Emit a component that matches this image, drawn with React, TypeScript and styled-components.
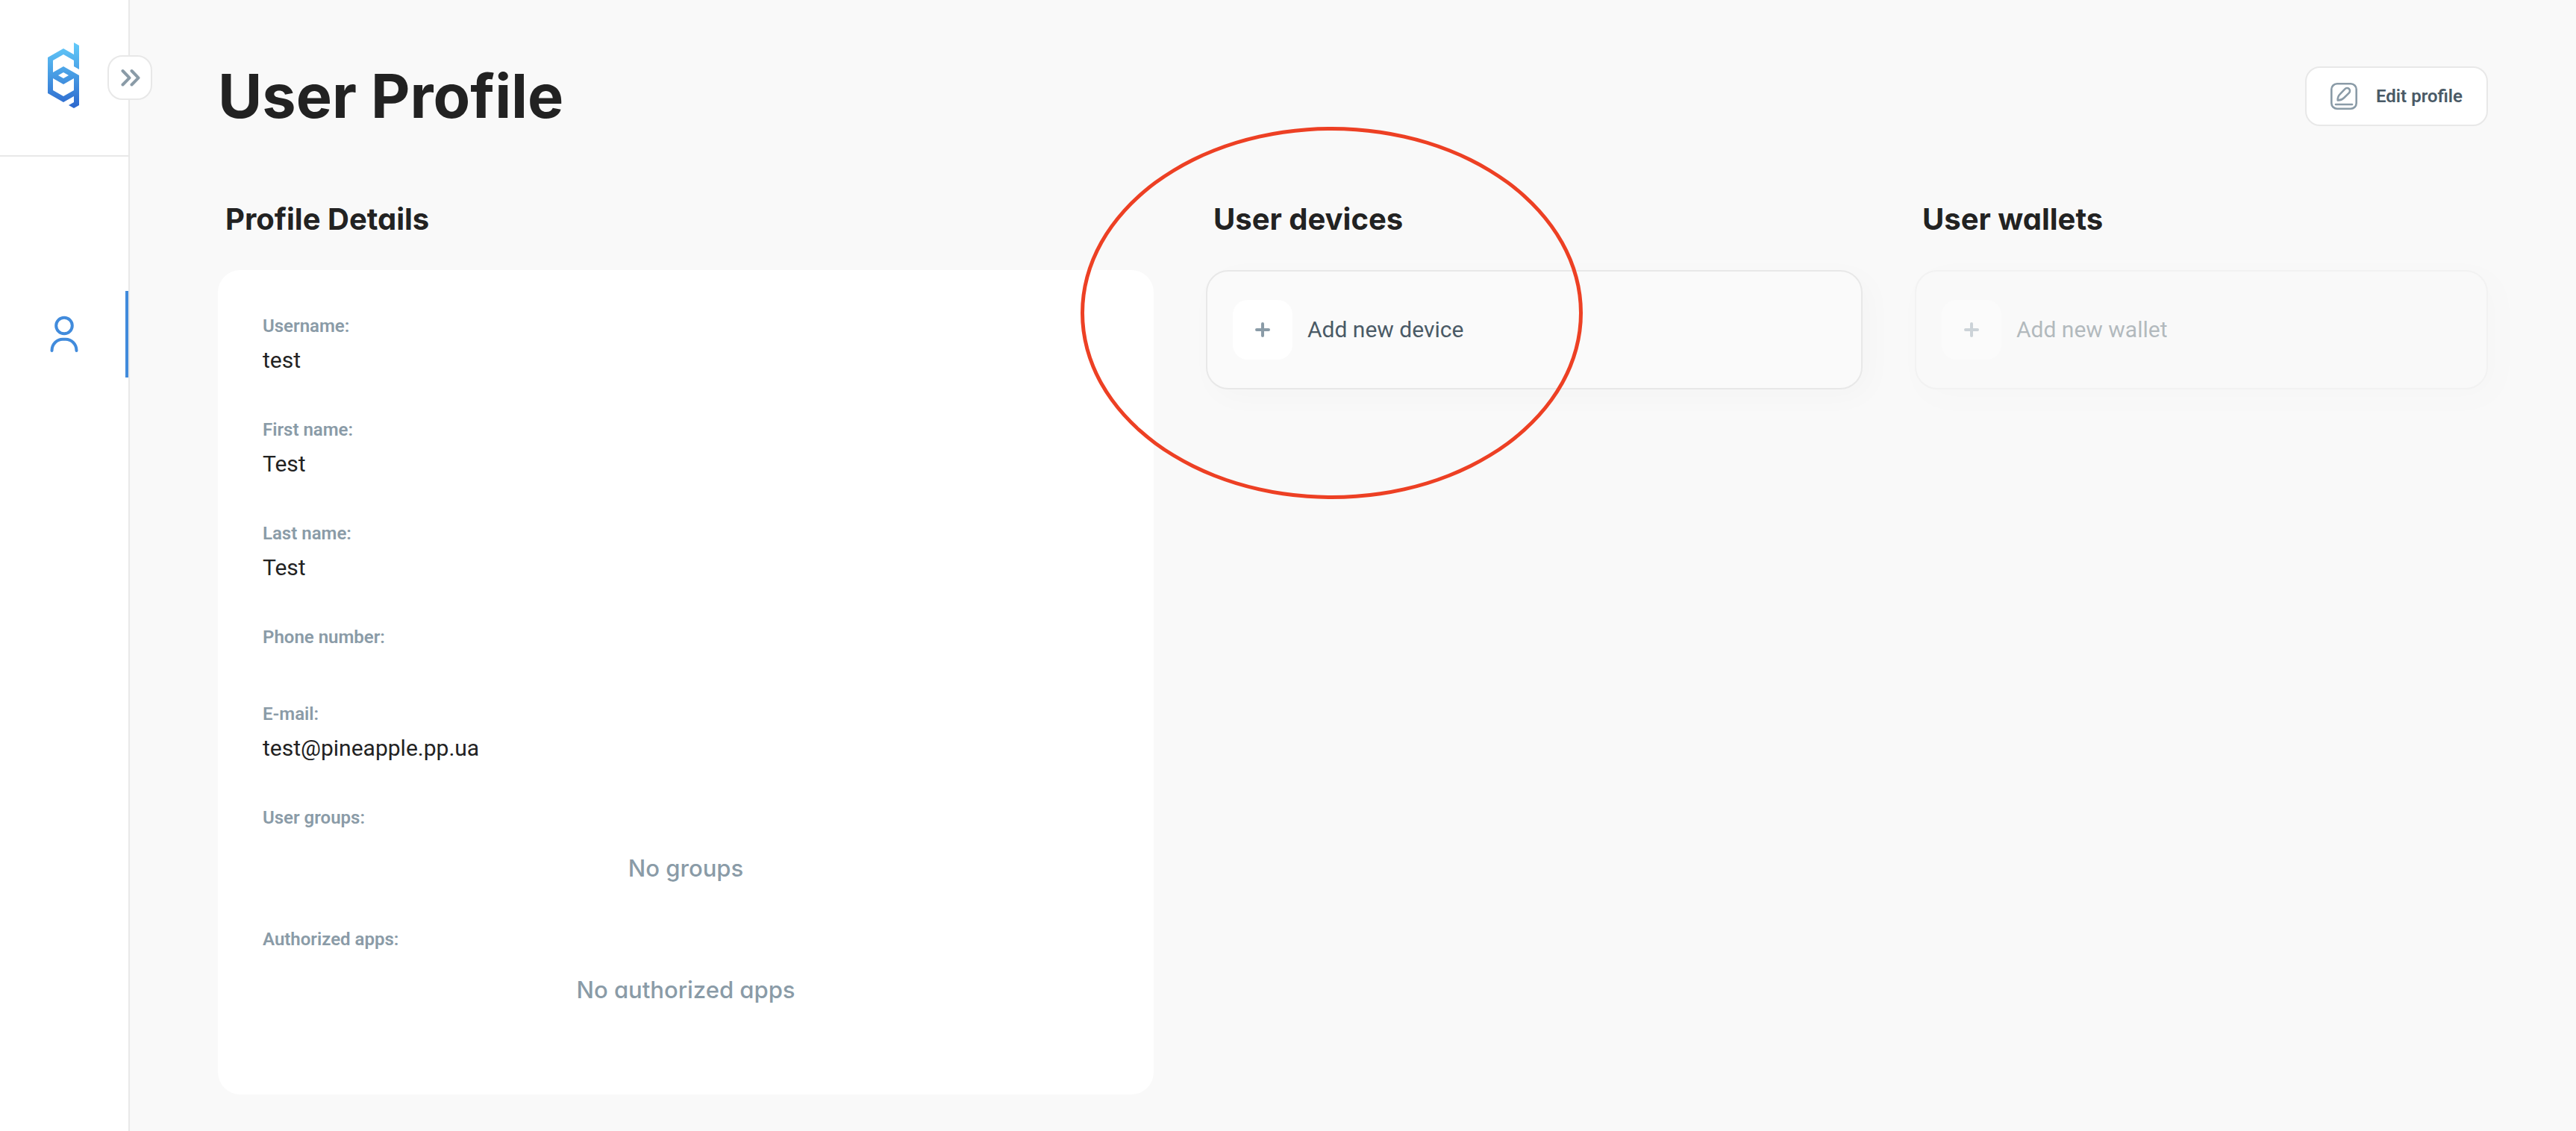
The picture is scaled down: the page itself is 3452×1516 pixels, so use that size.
import React from "react";
import styled, { createGlobalStyle } from "styled-components";

const color = {
  page: "#f9f9f9",
  surface: "#ffffff",
  line: "#e8e8e8",
  ink: "#222222",
  slate: "#4a5a66",
  muted: "#8a9ba7",
  accent: "#418bdc",
  marker: "#ed4024",
};

const displayFont = `Inter, "Open Sans", sans-serif`;

const GlobalStyle = createGlobalStyle`
  *, *::before, *::after { box-sizing: border-box; }
  body {
    margin: 0;
    background: ${color.page};
    color: ${color.ink};
    font-family: Roboto, "Liberation Sans", sans-serif;
    -webkit-font-smoothing: antialiased;
  }
  button { font: inherit; cursor: pointer; }
`;

const Shell = styled.div`
  display: flex;
  min-height: 100vh;
`;

const Sidebar = styled.aside`
  position: relative;
  flex: none;
  width: 174px;
  background: ${color.surface};
  border-right: 2px solid ${color.line};
`;

const Brand = styled.a`
  display: flex;
  justify-content: center;
  align-items: center;
  height: 210px;
  padding: 0 2px 6px 0;
  border-bottom: 2px solid ${color.line};
`;

const Toggle = styled.button`
  position: absolute;
  top: 74px;
  right: -32px;
  display: grid;
  place-items: center;
  width: 60px;
  height: 60px;
  padding: 0;
  background: ${color.surface};
  border: 2px solid ${color.line};
  border-radius: 20px;
`;

const Nav = styled.nav`
  padding-top: 180px;
`;

const NavLink = styled.a`
  display: flex;
  justify-content: center;
  align-items: center;
  height: 116px;
  padding-left: 4px;
  border-right: 4px solid ${color.accent};
`;

const Main = styled.main`
  flex: 1;
  min-width: 0;
  padding: 70px 118px 48px;
`;

const Header = styled.header`
  display: flex;
  justify-content: space-between;
  align-items: center;
  height: 118px;
`;

const PageTitle = styled.h1`
  margin: 0;
  font: 700 81px/118px ${displayFont};
`;

const EditButton = styled.button`
  display: flex;
  align-items: center;
  gap: 25px;
  height: 80px;
  padding: 0 32px;
  background: ${color.surface};
  border: 2px solid ${color.line};
  border-radius: 20px;
  color: ${color.slate};
  font-size: 24px;
  font-weight: 600;
  line-height: 28px;
`;

const Columns = styled.div`
  display: grid;
  grid-template-columns: 1254fr 880fr 768fr;
  gap: 70px;
  align-items: start;
  padding-top: 76px;
`;

const Section = styled.section`
  position: relative;
`;

const SectionTitle = styled.h2`
  margin: 0;
  padding: 0 10px 38px;
  font: 700 40px/60px ${displayFont};
  font-feature-settings: "cv11";
`;

const Details = styled.dl`
  margin: 0;
  padding: 61px 60px 0;
  background: ${color.surface};
  border-radius: 30px;
  overflow: hidden;
`;

const Field = styled.div`
  padding-bottom: 61px;

  &:last-child {
    padding-bottom: 120px;
  }
`;

const Label = styled.dt`
  margin-bottom: 14px;
  color: ${color.muted};
  font-size: 24px;
  font-weight: 600;
  line-height: 28px;
`;

const Value = styled.dd`
  margin: 0;
  font-size: 30px;
  line-height: 36px;
`;

const Empty = styled.dd`
  margin: 0;
  padding-top: 20px;
  color: ${color.muted};
  font: 500 31px/40px ${displayFont};
  font-feature-settings: "cv11";
  text-align: center;
`;

const AddTile = styled.span`
  display: grid;
  place-items: center;
  width: 80px;
  height: 80px;
  background: ${color.surface};
  border-radius: 20px;
`;

const AddButton = styled.button`
  display: flex;
  align-items: center;
  gap: 20px;
  width: 100%;
  height: 160px;
  padding: 0 34px;
  background: #fafafa;
  border: 2px solid ${color.line};
  border-radius: 30px;
  box-shadow: 10px 10px 40px rgba(0, 0, 0, 0.024);
  color: ${color.slate};
  font-size: 30px;
  line-height: 36px;

  &:disabled {
    opacity: 0.4;
    cursor: default;
  }
`;

const Highlight = styled.div`
  position: absolute;
  top: -94px;
  left: -168px;
  width: 673px;
  height: 499px;
  border: 5px solid ${color.marker};
  border-radius: 50%;
  pointer-events: none;
`;

const Logo = () => (
  <svg width="42" height="88" viewBox="192 171 126 264" aria-hidden="true">
    <defs>
      <linearGradient id="brand" x1="0" y1="0" x2="0" y2="1">
        <stop offset="0" stopColor="#63cbfa" />
        <stop offset="0.5" stopColor="#479be3" />
        <stop offset="1" stopColor="#2c67cd" />
      </linearGradient>
    </defs>
    <path
      fill="url(#brand)"
      fillRule="evenodd"
      d="M297 171 318 183V279L297 267V243L255 219 213 243V291L255 267 318 303V423L297 435 276 423 297 411V387L255 411 192 375V231L255 195 297 219ZM213 315V363L255 387 297 363V315L255 339ZM234 303 255 315 276 303 255 291Z"
    />
  </svg>
);

const ChevronsIcon = () => (
  <svg width="28" height="24" viewBox="0 0 28 24" fill="none" stroke={color.muted} strokeWidth="4" strokeLinecap="round" strokeLinejoin="round" aria-hidden="true">
    <path d="M4.500 3 13.500 12.300 4.500 21.500M16.500 3 25.500 12.300 16.500 21.500" />
  </svg>
);

const UserIcon = () => (
  <svg width="38" height="50" viewBox="0 0 38 50" fill="none" stroke={color.accent} strokeWidth="4" strokeLinecap="round" aria-hidden="true">
    <circle cx="19" cy="13.5" r="10.8" />
    <path d="M2.5 47C2.5 38 9.5 31.800 17 31.800H21C28.500 31.800 35.500 38 35.500 47" />
  </svg>
);

const EditIcon = () => (
  <svg width="36" height="36" viewBox="0 0 36 36" fill="none" stroke={color.muted} strokeWidth="2.6" strokeLinecap="round" strokeLinejoin="round" aria-hidden="true">
    <rect x="1.300" y="1.300" width="33.400" height="33.400" rx="7.500" />
    <path d="M7 29H29" />
    <path d="M9.700 23.400C9.500 20 10.500 17.500 12.800 15.200L19.300 8.300C20.800 6.700 23.200 6.500 24.800 8 26.400 9.500 26.400 12 24.800 13.600L18 20.200C15.500 22.600 13 23.600 9.700 23.400Z" />
  </svg>
);

const PlusIcon = () => (
  <svg width="20" height="20" viewBox="0 0 20 20" stroke={color.muted} strokeWidth="4" strokeLinecap="round" aria-hidden="true">
    <path d="M10 2V18M2 10H18" />
  </svg>
);

const fields = [
  { label: "Username:", value: "test" },
  { label: "First name:", value: "Test" },
  { label: "Last name:", value: "Test" },
  { label: "Phone number:", value: "" },
  { label: "E-mail:", value: "test@pineapple.pp.ua" },
];

const lists = [
  { label: "User groups:", empty: "No groups" },
  { label: "Authorized apps:", empty: "No authorized apps" },
];

export default function App() {
  return (
    <>
      <GlobalStyle />
      <Shell>
        <Sidebar>
          <Brand href="#home" aria-label="Home">
            <Logo />
          </Brand>
          <Toggle type="button" aria-label="Expand menu">
            <ChevronsIcon />
          </Toggle>
          <Nav>
            <NavLink href="#profile" aria-label="Profile" aria-current="page">
              <UserIcon />
            </NavLink>
          </Nav>
        </Sidebar>
        <Main>
          <Header>
            <PageTitle>User Profile</PageTitle>
            <EditButton type="button">
              <EditIcon />
              Edit profile
            </EditButton>
          </Header>
          <Columns>
            <Section>
              <SectionTitle>Profile Details</SectionTitle>
              <Details>
                {fields.map(({ label, value }) => (
                  <Field key={label}>
                    <Label>{label}</Label>
                    <Value>{value}</Value>
                  </Field>
                ))}
                {lists.map(({ label, empty }) => (
                  <Field key={label}>
                    <Label>{label}</Label>
                    <Empty>{empty}</Empty>
                  </Field>
                ))}
              </Details>
            </Section>
            <Section>
              <SectionTitle>User devices</SectionTitle>
              <AddButton type="button">
                <AddTile>
                  <PlusIcon />
                </AddTile>
                Add new device
              </AddButton>
              <Highlight />
            </Section>
            <Section>
              <SectionTitle>User wallets</SectionTitle>
              <AddButton type="button" disabled>
                <AddTile>
                  <PlusIcon />
                </AddTile>
                Add new wallet
              </AddButton>
            </Section>
          </Columns>
        </Main>
      </Shell>
    </>
  );
}
